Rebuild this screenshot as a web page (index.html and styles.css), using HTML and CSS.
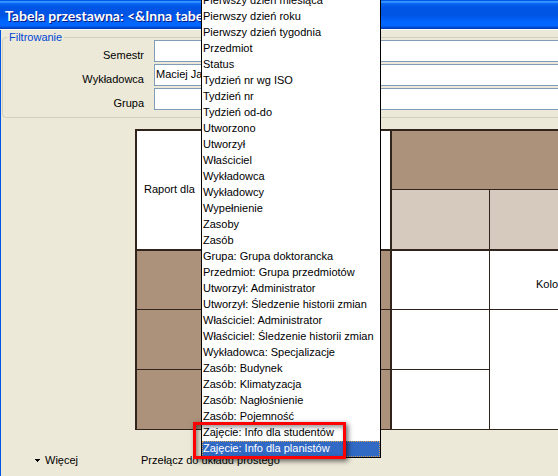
FILE: index.html
```html
<!DOCTYPE html>
<html lang="pl">
<head>
<meta charset="utf-8">
<title>Tabela przestawna</title>
<link rel="stylesheet" href="styles.css">
</head>
<body>
<div class="window">
  <header class="titlebar"><h1>Tabela przestawna: &lt;&amp;Inna tabela</h1></header>
  <main class="content">
    <fieldset class="filters">
      <legend>Filtrowanie</legend>
      <label for="semestr">Semestr</label>
      <input id="semestr" type="text">
      <label for="wykladowca">Wykładowca</label>
      <input id="wykladowca" type="text" value="Maciej Ja">
      <label for="grupa">Grupa</label>
      <input id="grupa" type="text">
    </fieldset>
    <table class="pivot">
      <colgroup><col class="col-rows"><col class="col-value"><col></colgroup>
      <tbody>
        <tr class="row"><td class="corner" rowspan="2">Raport dla</td><th class="dark edge" colspan="2"></th></tr>
        <tr class="row last-head"><th class="light"></th><th class="light edge"></th></tr>
        <tr class="row"><th class="dark side"></th><td></td><td class="kolo edge">Kolo</td></tr>
        <tr class="row tall"><th class="dark side"></th><td></td><td class="edge" rowspan="2"></td></tr>
        <tr class="row tall"><th class="dark side"></th><td></td></tr>
      </tbody>
    </table>
    <footer class="actions">
      <button type="button" class="more"><svg width="5" height="3" viewBox="0 0 5 3" shape-rendering="crispEdges" aria-hidden="true"><path d="M0 0h5v1H4v1H3v1H2V2H1V1H0z"/></svg>Więcej</button>
      <button type="button">Przełącz do układu prostego</button>
    </footer>
  </main>
  <div class="popup">
    <select class="list" size="29" aria-label="Raport dla">
      <option>Pierwszy dzień miesiąca</option>
      <option>Pierwszy dzień roku</option>
      <option>Pierwszy dzień tygodnia</option>
      <option>Przedmiot</option>
      <option>Status</option>
      <option>Tydzień nr wg ISO</option>
      <option>Tydzień nr</option>
      <option>Tydzień od-do</option>
      <option>Utworzono</option>
      <option>Utworzył</option>
      <option>Właściciel</option>
      <option>Wykładowca</option>
      <option>Wykładowcy</option>
      <option>Wypełnienie</option>
      <option>Zasoby</option>
      <option>Zasób</option>
      <option>Grupa: Grupa doktorancka</option>
      <option>Przedmiot: Grupa przedmiotów</option>
      <option>Utworzył: Administrator</option>
      <option>Utworzył: Śledzenie historii zmian</option>
      <option>Właściciel: Administrator</option>
      <option>Właściciel: Śledzenie historii zmian</option>
      <option>Wykładowca: Specjalizacje</option>
      <option>Zasób: Budynek</option>
      <option>Zasób: Klimatyzacja</option>
      <option>Zasób: Nagłośnienie</option>
      <option>Zasób: Pojemność</option>
      <option>Zajęcie: Info dla studentów</option>
      <option selected>Zajęcie: Info dla planistów</option>
    </select>
    <div class="marker"></div>
  </div>
</div>
</body>
</html>
```
FILE: styles.css
```css
* { box-sizing: border-box; }

body {
  margin: 0;
  overflow: hidden;
  background: #ece9d8;
  color: #000;
  font: 11px/16px "Liberation Sans", Arial, sans-serif;
}

.window {
  position: relative;
  min-height: 100vh;
  overflow: hidden;
}

.titlebar {
  height: 30px;
  padding: 6px 5px;
  border-bottom: 1px solid #fff;
  background: linear-gradient(#0058e6 0 1px, #3a93ff 1px 2px, #288eff 2px 3px, #0a6af5 3px, #0055e5 7px, #0054e3 15px, #0066ff 22px, #0066ff 26px, #0050d8 27px, #0038b8 29px);
  color: #fff;
}

.titlebar h1 {
  margin: 0;
  font: bold 14px/20px Lato, "Open Sans", sans-serif;
  text-shadow: 1px 1px #0a1883;
  white-space: nowrap;
}

.content {
  min-height: calc(100vh - 30px);
  border-left: 1px solid #0055e5;
}

.filters {
  display: grid;
  grid-template-columns: 141px 1fr;
  grid-auto-rows: 22px;
  column-gap: 10px;
  row-gap: 2px;
  align-items: center;
  margin: 0 -8px 0 1px;
  padding: 0 0 7px;
  border: 1px solid #d0d0bf;
  border-radius: 4px;
}

.filters legend {
  margin: 0 0 -4px 4px;
  padding: 0 2px;
  height: 14px;
  line-height: 14px;
  color: #0046d5;
}

.filters label {
  padding-top: 8px;
  text-align: right;
}

.filters input {
  width: 100%;
  height: 22px;
  padding: 0 1px 2px;
  border: 1px solid #7f9db9;
  border-radius: 0;
  background: #fff;
  color: #000;
  font: inherit;
}

.pivot {
  width: calc(100% - 134px);
  margin: 11px 0 0 134px;
  table-layout: fixed;
  border-collapse: separate;
  border-spacing: 0;
  border: solid #30241d;
  border-width: 2px 0 0 2px;
  background: #fff;
}

.col-rows { width: 255px; }
.col-value { width: 98px; }

.pivot .row { height: 59px; }
.pivot .last-head { height: 61px; }
.pivot .tall { height: 60px; }

.pivot td,
.pivot th {
  padding: 0;
  border: solid #30241d;
  border-width: 0 1px 1px 0;
  font-weight: normal;
  text-align: left;
}

.pivot .dark { background: #ac927b; }
.pivot .light { background: #d6cabe; border-bottom-width: 2px; }
.pivot .side { border-right-width: 2px; }
.pivot .corner { padding: 0 7px 2px; border-width: 0 2px 2px 0; }
.pivot .kolo { padding: 8px 0 0 46px; }
.pivot .edge { border-right-width: 0; }

.actions {
  display: flex;
  gap: 63px;
  padding: 22px 0 0 34px;
}

.actions button {
  display: flex;
  align-items: center;
  gap: 5px;
  padding: 0;
  border: 0;
  background: none;
  color: #000;
  font: inherit;
}

.popup {
  position: absolute;
  top: -8px;
  left: 201px;
  width: 180px;
}

.list {
  display: block;
  width: 100%;
  height: 466px;
  padding: 0;
  overflow: hidden;
  border: 1px solid #000;
  border-radius: 0;
  outline: 0;
  background: #fff;
  color: #000;
  font: inherit;
}

.list option {
  height: 16px;
  min-height: 16px;
  padding: 1px 1px 0;
  line-height: 16px;
}

.list option:checked {
  background: #316ac5 linear-gradient(#316ac5, #316ac5);
  color: #fff;
  outline: 1px dotted #d8a050;
  outline-offset: -1px;
}

.marker {
  position: absolute;
  right: 35px;
  bottom: -1px;
  left: -8px;
  height: 37px;
  border: 3px solid #f00;
  box-shadow: 2px 2px 5px rgb(0 0 0 / 60%), inset 2px 2px 5px rgb(0 0 0 / 45%);
  pointer-events: none;
}
```
